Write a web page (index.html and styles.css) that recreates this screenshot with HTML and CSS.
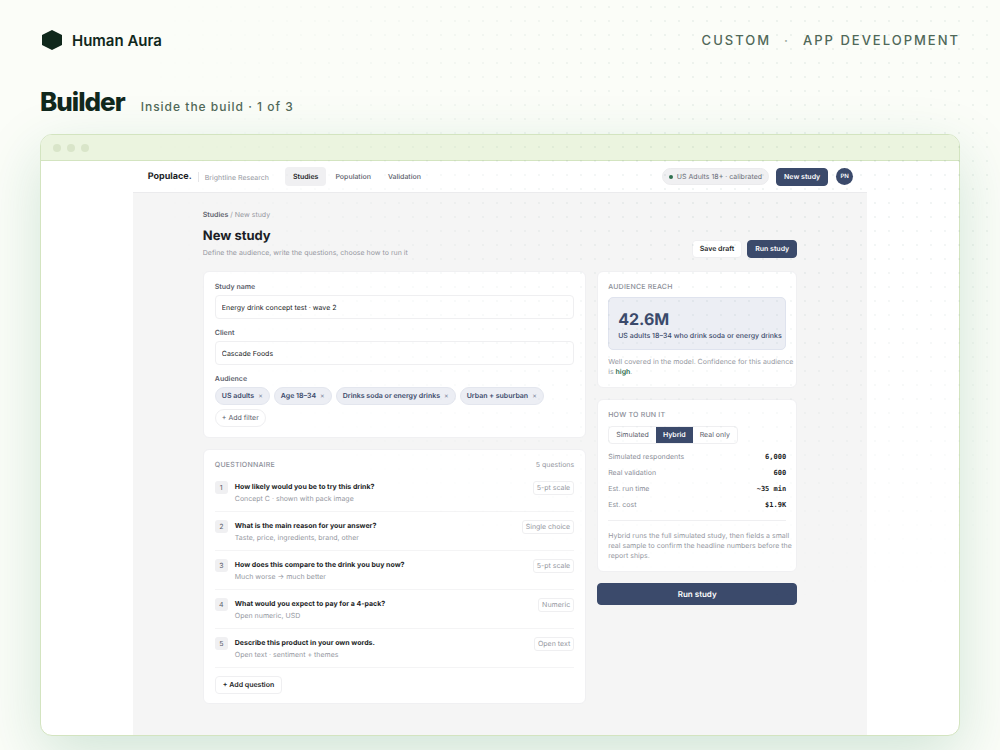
FILE: index.html
```html
<!DOCTYPE html>
<html lang="en">
<head>
<meta charset="utf-8">
<meta name="viewport" content="width=device-width, initial-scale=1">
<title>Human Aura – Builder</title>
<link rel="stylesheet" href="styles.css">
</head>
<body>
<div class="page">
  <header class="masthead">
    <a class="brand" href="#">
      <svg class="brand-mark" viewBox="0 0 24 24" aria-hidden="true"><path d="M12 2 22 7V17L12 22 2 17V7Z"/></svg>
      Human Aura
    </a>
    <p class="service"><span>Custom</span><span class="service-dot">·</span><span>App development</span></p>
  </header>

  <div class="heading">
    <h1 class="heading-title">Builder</h1>
    <p class="heading-note">Inside the build · 1 of 3</p>
  </div>

  <main class="window">
    <div class="window-bar"><i class="window-dot"></i><i class="window-dot"></i><i class="window-dot"></i></div>
    <div class="app">
      <div class="topbar">
        <div class="logo">Populace<span class="logo-dot">.</span></div>
        <div class="org">Brightline Research</div>
        <nav class="nav">
          <a class="nav-link nav-link-active" href="#">Studies</a>
          <a class="nav-link" href="#">Population</a>
          <a class="nav-link" href="#">Validation</a>
        </nav>
        <div class="status"><i class="status-dot"></i>US Adults 18+ · calibrated</div>
        <button class="button button-primary" type="button">New study</button>
        <div class="avatar">PN</div>
      </div>

      <div class="content">
        <div class="intro">
          <div>
            <p class="crumbs"><a class="crumb-link" href="#">Studies</a> / New study</p>
            <h2 class="intro-title">New study</h2>
            <p class="intro-text">Define the audience, write the questions, choose how to run it</p>
          </div>
          <div class="intro-actions">
            <button class="button" type="button">Save draft</button>
            <button class="button button-primary" type="button">Run study</button>
          </div>
        </div>

        <div class="columns">
          <div class="stack">
            <section class="card form">
              <div class="field">
                <label class="label" for="study">Study name</label>
                <input class="input" id="study" type="text" value="Energy drink concept test · wave 2">
              </div>
              <div class="field">
                <label class="label" for="client">Client</label>
                <input class="input" id="client" type="text" value="Cascade Foods">
              </div>
              <div class="field">
                <div class="label">Audience</div>
                <div class="chips">
                  <span class="chip">US adults<button class="chip-remove" type="button">×</button></span>
                  <span class="chip">Age 18–34<button class="chip-remove" type="button">×</button></span>
                  <span class="chip">Drinks soda or energy drinks<button class="chip-remove" type="button">×</button></span>
                  <span class="chip">Urban + suburban<button class="chip-remove" type="button">×</button></span>
                  <button class="chip chip-add" type="button">+ Add filter</button>
                </div>
              </div>
            </section>

            <section class="card">
              <div class="card-head">
                <h3 class="card-title">Questionnaire</h3>
                <span class="count">5 questions</span>
              </div>
              <div class="questions">
                <div class="question"><span class="number">1</span><div class="question-body"><h4 class="question-title">How likely would you be to try this drink?</h4><p class="question-note">Concept C · shown with pack image</p></div><span class="tag">5-pt scale</span></div>
                <div class="question"><span class="number">2</span><div class="question-body"><h4 class="question-title">What is the main reason for your answer?</h4><p class="question-note">Taste, price, ingredients, brand, other</p></div><span class="tag">Single choice</span></div>
                <div class="question"><span class="number">3</span><div class="question-body"><h4 class="question-title">How does this compare to the drink you buy now?</h4><p class="question-note">Much worse → much better</p></div><span class="tag">5-pt scale</span></div>
                <div class="question"><span class="number">4</span><div class="question-body"><h4 class="question-title">What would you expect to pay for a 4-pack?</h4><p class="question-note">Open numeric, USD</p></div><span class="tag">Numeric</span></div>
                <div class="question"><span class="number">5</span><div class="question-body"><h4 class="question-title">Describe this product in your own words.</h4><p class="question-note">Open text · sentiment + themes</p></div><span class="tag">Open text</span></div>
              </div>
              <button class="button" type="button">+ Add question</button>
            </section>
          </div>

          <aside class="stack">
            <section class="card card-narrow">
              <h3 class="card-title">Audience reach</h3>
              <div class="reach">
                <div class="reach-value">42.6M</div>
                <div class="reach-text">US adults 18–34 who drink soda or energy drinks</div>
              </div>
              <p class="note">Well covered in the model. Confidence for this audience is <b class="good">high</b>.</p>
            </section>

            <section class="card card-narrow">
              <h3 class="card-title">How to run it</h3>
              <div class="segments" role="radiogroup" aria-label="How to run it">
                <label class="segment"><input class="segment-input" type="radio" name="mode">Simulated</label>
                <label class="segment"><input class="segment-input" type="radio" name="mode" checked>Hybrid</label>
                <label class="segment"><input class="segment-input" type="radio" name="mode">Real only</label>
              </div>
              <dl class="facts">
                <div class="fact"><dt>Simulated respondents</dt><dd class="fact-value">6,000</dd></div>
                <div class="fact"><dt>Real validation</dt><dd class="fact-value">600</dd></div>
                <div class="fact"><dt>Est. run time</dt><dd class="fact-value">~35 min</dd></div>
                <div class="fact"><dt>Est. cost</dt><dd class="fact-value">$1.9K</dd></div>
              </dl>
              <p class="note">Hybrid runs the full simulated study, then fields a small real sample to confirm the headline numbers before the report ships.</p>
            </section>

            <button class="button button-primary button-wide" type="button">Run study</button>
          </aside>
        </div>
      </div>
    </div>
  </main>
</div>
</body>
</html>
```
FILE: styles.css
```css
* { box-sizing: border-box; }

body, h1, h2, h3, h4, p, dl, dd { margin: 0; }

body {
  font-family: Inter, "Liberation Sans", sans-serif;
  background: #fbfdf8;
}

a { color: inherit; text-decoration: none; }

button, input { font: inherit; color: inherit; text-rendering: inherit; }

.page {
  position: relative;
  min-height: 100vh;
  padding: 28px 40px 14px;
  overflow: hidden;
}

/* Dotted texture, strongest near the upper right */
.page::after {
  content: "";
  position: absolute;
  inset: 0;
  pointer-events: none;
  background: radial-gradient(circle, rgba(22, 80, 72, 0.06) 1px, transparent 1px) 0 0 / 14px 14px;
  -webkit-mask-image: radial-gradient(ellipse 66% 66% at 80% 15%, #000 25%, transparent 100%);
  mask-image: radial-gradient(ellipse 66% 66% at 80% 15%, #000 25%, transparent 100%);
}

.masthead {
  display: flex;
  justify-content: space-between;
  align-items: center;
  height: 24px;
}

.brand {
  display: flex;
  align-items: center;
  gap: 8px;
  font-size: 15px;
  font-weight: 600;
  color: #10281c;
}

.brand-mark { width: 24px; height: 24px; fill: #10281c; }

.service {
  display: flex;
  gap: 13px;
  font-size: 13px;
  line-height: 16px;
  font-weight: 500;
  letter-spacing: 2px;
  text-transform: uppercase;
  color: #506858;
}

.service-dot { color: #9bab9f; }

.heading {
  display: flex;
  align-items: baseline;
  gap: 16px;
  padding: 34px 0 16px;
}

.heading-title {
  font-size: 26px;
  line-height: 32px;
  font-weight: 800;
  letter-spacing: -1px;
  color: #10281c;
}

.heading-note {
  font-size: 12px;
  font-weight: 500;
  letter-spacing: 1px;
  color: #506858;
}

.window {
  border: 1px solid #d3e4c0;
  border-radius: 12px;
  overflow: hidden;
  background: #fff;
  box-shadow: 0 20px 60px rgba(22, 120, 72, 0.18);
}

.window-bar {
  display: flex;
  align-items: center;
  gap: 6px;
  height: 26px;
  padding: 0 12px;
  background: #ebf4df;
  border-bottom: 1px solid #d3e4c0;
}

.window-dot { width: 8px; height: 8px; border-radius: 50%; background: #d9e5c9; }

.app {
  width: 80%;
  margin: 0 auto;
  background: #f5f5f5;
  font-size: 7px;
  line-height: 10px;
  color: #1c1e26;
  text-rendering: geometricPrecision;
}

.topbar {
  display: flex;
  align-items: center;
  height: 32px;
  padding: 0 14px 0 15px;
  background: #fff;
  border-bottom: 1px solid #ebebed;
}

.logo { font-size: 9px; font-weight: 700; }
.logo-dot { color: #3b4a6b; }

.org {
  margin-left: 6px;
  padding: 2px 0 0 6px;
  border-left: 1px solid #e6e6e9;
  line-height: 8px;
  color: #9598a1;
}

.nav { display: flex; gap: 1px; margin: 0 auto 0 16px; }

.nav-link {
  padding: 4px 8px;
  border-radius: 4px;
  font-weight: 500;
  line-height: 11px;
  color: #5c606b;
}

.nav-link-active { background: #f0f0f2; font-weight: 600; color: #1c1e26; }

.status {
  display: flex;
  align-items: center;
  gap: 4px;
  height: 17px;
  margin-right: 7px;
  padding: 0 6px;
  border: 1px solid #ebebed;
  border-radius: 9px;
  background: #f0f0f2;
  color: #6a6e78;
}

.status-dot { width: 4px; height: 4px; border-radius: 50%; background: #2f6f4f; }

.avatar {
  width: 17px;
  margin-left: 8px;
  border-radius: 50%;
  background: #3b4a6b;
  color: #fff;
  font-size: 6px;
  font-weight: 600;
  line-height: 17px;
  text-align: center;
}

.button {
  height: 18px;
  padding: 0 7px;
  border: 1px solid #efeff1;
  border-radius: 4px;
  background: #fff;
  font-weight: 600;
  line-height: 10px;
}

.button-primary { background: #3b4a6b; border-color: #3b4a6b; color: #fff; }

.button-wide { width: 100%; height: 22px; font-size: 8px; }

.content { padding: 17px 70px 31px; }

.intro { display: flex; justify-content: space-between; align-items: flex-end; }

.crumbs { color: #9598a1; }
.crumb-link { color: #5c606b; font-weight: 600; }

.intro-title {
  margin: 8px 0 4px;
  font-size: 13px;
  line-height: 16px;
  font-weight: 700;
}

.intro-text { color: #9598a1; }

.intro-actions { display: flex; gap: 5px; }

.columns {
  display: grid;
  grid-template-columns: minmax(0, 1fr) 200px;
  gap: 11px;
  align-items: start;
  margin-top: 13px;
}

.stack { display: grid; gap: 11px; }

.card {
  padding: 10px 11px 9px;
  border: 1px solid #f0f0f2;
  border-radius: 6px;
  background: #fff;
}

.card-narrow { padding: 10px; }

.form { display: grid; gap: 9px; padding: 10px 11px; }

.field { display: grid; gap: 3px; }

.label { font-weight: 600; color: #5c606b; }

.input {
  width: 100%;
  height: 24px;
  padding: 0 6px;
  border: 1px solid #efeff1;
  border-radius: 4px;
  background: #fff;
  color: #1c1e26;
}

.chips { display: flex; flex-wrap: wrap; gap: 4px; }

.chip {
  display: flex;
  align-items: center;
  gap: 4px;
  height: 18px;
  padding: 0 6px;
  border: 1px solid #e3e6ee;
  border-radius: 9px;
  background: #eceef4;
  color: #3b4a6b;
  font-weight: 600;
}

.chip-remove { padding: 0; border: 0; background: none; color: #858da3; font-weight: 400; }

.chip-add { border-color: #efeff1; background: #fff; color: #5c606b; font-weight: 400; }

.card-head { display: flex; justify-content: space-between; }

.card-title {
  font-size: 7px;
  font-weight: 500;
  letter-spacing: 0.03em;
  text-transform: uppercase;
  color: #8b8e98;
}

.count { color: #9598a1; }

.questions { padding: 3px 0 8px; }

.question {
  display: flex;
  gap: 7px;
  height: 39px;
  padding-top: 8px;
  border-bottom: 1px solid #f4f4f5;
}

.number {
  width: 13px;
  height: 13px;
  border-radius: 3px;
  background: #f0f0f2;
  color: #5c606b;
  line-height: 13px;
  text-align: center;
}

.question-body { flex: 1; }

.question-title { font-size: 7px; line-height: 12px; font-weight: 700; }

.question-note { line-height: 12px; color: #9598a1; }

.tag {
  height: 14px;
  padding: 0 3px;
  border: 1px solid #efeff1;
  border-radius: 3px;
  color: #9598a1;
  line-height: 12px;
}

.reach {
  margin: 5px 0 7px;
  padding: 11px 0 8px 9px;
  border: 1px solid #dfe3ee;
  border-radius: 5px;
  background: #eceef4;
  color: #3b4a6b;
}

.reach-value { font-size: 16px; line-height: 20px; font-weight: 700; }

.reach-text { padding-top: 2px; font-weight: 500; white-space: nowrap; }

/* Notes run a little into the card's right padding */
.note { margin-right: -8px; color: #9598a1; }

.good { color: #2f6f4f; font-weight: 600; }

.segments {
  display: flex;
  width: fit-content;
  height: 18px;
  margin: 6px 0 5px;
  border: 1px solid #efeff1;
  border-radius: 4px;
  overflow: hidden;
}

.segment { position: relative; padding: 0 7px; line-height: 16px; color: #5c606b; }

.segment:has(:checked) { background: #3b4a6b; color: #fff; font-weight: 600; }

.segment-input { position: absolute; inset: 0; margin: 0; opacity: 0; }

.facts {
  margin-bottom: 10px;
  padding-bottom: 7px;
  border-bottom: 1px solid #efeff1;
}

.fact { display: flex; justify-content: space-between; line-height: 16px; color: #8b8e98; }

.fact-value {
  font-family: "DejaVu Sans Mono", monospace;
  font-weight: 700;
  color: #1c1e26;
}
```
